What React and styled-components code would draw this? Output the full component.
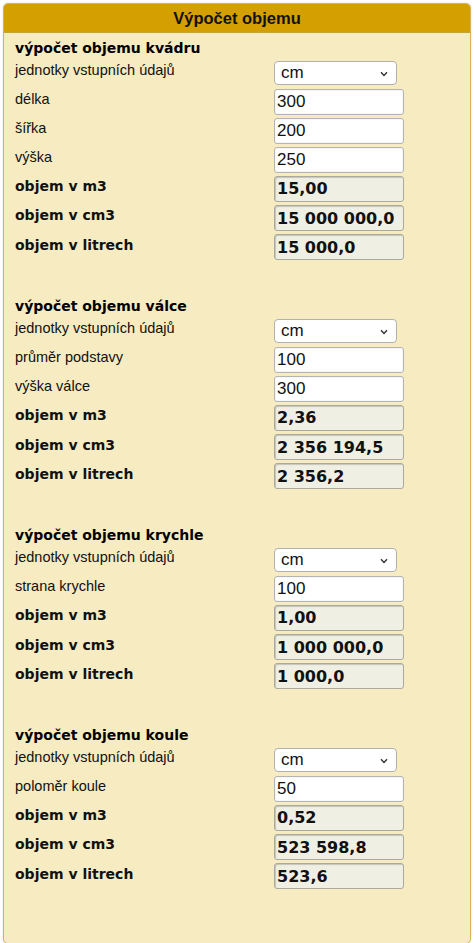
import React from "react";
import styled, { createGlobalStyle } from "styled-components";

const Global = createGlobalStyle`
  html, body { margin: 0; padding: 0; background: #ffffff; }
  body { font-family: "Liberation Sans", Arial, sans-serif; }
`;

const Panel = styled.div`
  margin: 3px;
  width: 468px;
  box-sizing: border-box;
  background: #f6ebc1;
  border: 1px solid #d6b45a;
  border-radius: 5px;
  overflow: hidden;
  padding-bottom: 52px;
  box-shadow: 0 0 2px rgba(0, 0, 0, 0.15);
`;

const Header = styled.div`
  height: 28px;
  background: #d49f00;
  border-bottom: 1px solid #c8a040;
  display: flex;
  align-items: center;
  justify-content: center;
  font-family: "Liberation Sans", Arial, sans-serif;
  font-weight: bold;
  font-size: 16.5px;
  color: #111;
`;

const Body = styled.div`
  padding: 6px 0 0 11px;
`;

const Section = styled.section`
  margin-bottom: ${(p) => (p.$last ? 0 : 35.5)}px;
`;

const Heading = styled.div`
  height: 19px;
  line-height: 19px;
  font-family: "DejaVu Sans", Verdana, sans-serif;
  font-weight: bold;
  font-size: 14px;
  color: #000;
`;

const Row = styled.div`
  display: grid;
  grid-template-columns: 259px auto;
  height: 29.1px;
  align-items: center;
`;

const Label = styled.div`
  align-self: start;
  line-height: 24px;
  font-family: ${(p) =>
    p.$bold ? '"DejaVu Sans", Verdana, sans-serif' : '"Liberation Sans", Arial, sans-serif'};
  font-weight: ${(p) => (p.$bold ? "bold" : "normal")};
  font-size: ${(p) => (p.$bold ? "14px" : "14.5px")};
  color: #111;
  white-space: nowrap;
`;

const Field = styled.div`
  width: 130px;
  height: 26px;
  box-sizing: border-box;
  border: 1px solid ${(p) => (p.$out ? "#a9a99c" : "#b4b4b4")};
  border-radius: 3px;
  background: ${(p) => (p.$out ? "#f0efe4" : "#ffffff")};
  box-shadow: ${(p) =>
    p.$out ? "inset 1px 1px 1px rgba(0,0,0,0.18)" : "inset 0 0 0 1px rgba(0,0,0,0.03)"};
  padding-left: 2px;
  display: flex;
  align-items: center;
  font-family: ${(p) =>
    p.$out ? '"DejaVu Sans", Verdana, sans-serif' : '"Liberation Sans", Arial, sans-serif'};
  font-weight: ${(p) => (p.$out ? "bold" : "normal")};
  font-size: ${(p) => (p.$out ? "16px" : "17px")};
  color: #111;
  white-space: nowrap;
`;

const SelectBox = styled.div`
  position: relative;
  width: 123px;
  height: 24px;
  box-sizing: border-box;
  border: 1px solid #b0b0b0;
  border-radius: 4px;
  background: #ffffff;
  padding-left: 6px;
  display: flex;
  align-items: center;
  font-family: "Liberation Sans", Arial, sans-serif;
  font-size: 17px;
  color: #111;
`;

const Chevron = styled.svg`
  position: absolute;
  right: 8px;
  top: 9px;
  width: 8px;
  height: 6px;
`;

const Select = ({ value }) => (
  <SelectBox>
    {value}
    <Chevron viewBox="0 0 8 6">
      <path d="M1 1.2 L4 4.4 L7 1.2" fill="none" stroke="#333" strokeWidth="1.4" />
    </Chevron>
  </SelectBox>
);

const sections = [
  {
    title: "výpočet objemu kvádru",
    inputs: [
      ["délka", "300"],
      ["šířka", "200"],
      ["výška", "250"],
    ],
    outputs: ["15,00", "15 000 000,0", "15 000,0"],
  },
  {
    title: "výpočet objemu válce",
    inputs: [
      ["průměr podstavy", "100"],
      ["výška válce", "300"],
    ],
    outputs: ["2,36", "2 356 194,5", "2 356,2"],
  },
  {
    title: "výpočet objemu krychle",
    inputs: [["strana krychle", "100"]],
    outputs: ["1,00", "1 000 000,0", "1 000,0"],
  },
  {
    title: "výpočet objemu koule",
    inputs: [["poloměr koule", "50"]],
    outputs: ["0,52", "523 598,8", "523,6"],
  },
];

const outLabels = ["objem v m3", "objem v cm3", "objem v litrech"];

export default function App() {
  return (
    <>
      <Global />
      <Panel>
        <Header>Výpočet objemu</Header>
        <Body>
          {sections.map((s, i) => (
            <Section key={s.title} $last={i === sections.length - 1}>
              <Heading>{s.title}</Heading>
              <Row>
                <Label>jednotky vstupních údajů</Label>
                <Select value="cm" />
              </Row>
              {s.inputs.map(([l, v]) => (
                <Row key={l}>
                  <Label>{l}</Label>
                  <Field>{v}</Field>
                </Row>
              ))}
              {s.outputs.map((v, j) => (
                <Row key={j}>
                  <Label $bold>{outLabels[j]}</Label>
                  <Field $out>{v}</Field>
                </Row>
              ))}
            </Section>
          ))}
        </Body>
      </Panel>
    </>
  );
}
